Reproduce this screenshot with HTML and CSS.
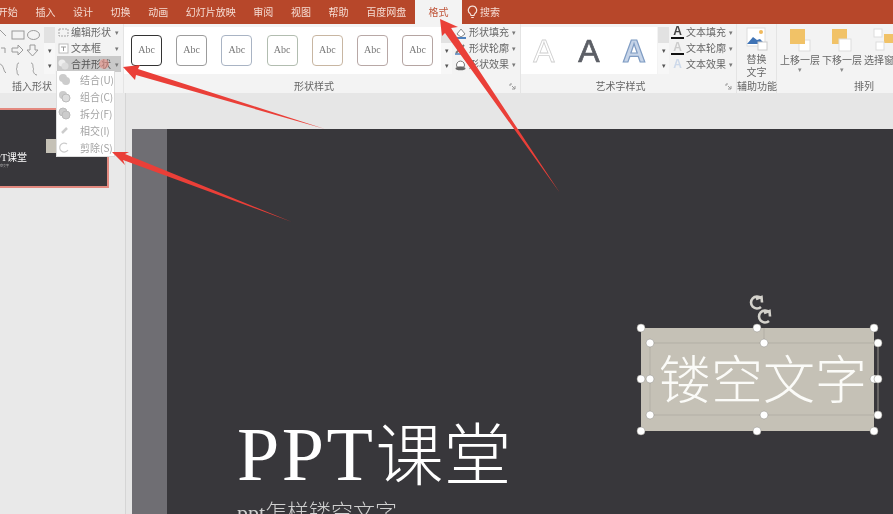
FILE: index.html
```html
<!DOCTYPE html>
<html lang="zh-CN">
<head>
<meta charset="utf-8">
<title>PPT课堂</title>
<link rel="stylesheet" href="styles.css">
</head>
<body>
<div class="app">
  <nav class="tabs">
    <span class="tab first">开始</span><span class="tab">插入</span><span class="tab">设计</span><span class="tab">切换</span><span class="tab">动画</span><span class="tab">幻灯片放映</span><span class="tab">审阅</span><span class="tab">视图</span><span class="tab">帮助</span><span class="tab">百度网盘</span>
    <span class="tab active">格式</span>
    <span class="search">
      <svg class="bulb" width="11" height="14" viewBox="0 0 11 14"><path d="M5.5 1a4.2 4.2 0 0 0-2.4 7.6c.6.5.8 1 .9 1.9h3c.1-.9.3-1.4.9-1.9A4.2 4.2 0 0 0 5.500 1zM4.200 12.500h2.600" fill="none" stroke="#f7e6df" stroke-width="1.200"/></svg>搜索
    </span>
  </nav>

  <section class="ribbon">
    <div class="group g-insert">
      <div class="group-body">
        <svg class="shapes" width="44" height="52" viewBox="0 0 44 52">
          <g fill="none" stroke="#9a9a9a" stroke-width="1">
            <path d="M-1 2l7 7"/><rect x="12" y="4" width="12" height="8"/><ellipse cx="33.500" cy="8" rx="6" ry="4.500"/>
            <path d="M1 21h4v5"/><path d="M12 21h6v-3l5 5-5 5v-3h-6z"/><path d="M30 18h5v5h3l-5.500 6-5.500-6h3z"/>
            <path d="M-1 37c5 0 4 7 7 9"/><path d="M19 36c-3 0-1 5-3 6 2 1 0 6 3 6"/><path d="M31 36c3 0 1 5 3 6-2 1 0 6 3 6"/>
          </g>
        </svg>
        <div class="scroll"><i class="up"></i><i>▾</i><i>▾</i></div>
        <div class="cmds edit">
          <div class="cmd"><svg width="11" height="11" viewBox="0 0 11 11"><rect x="1" y="2" width="9" height="7" fill="none" stroke="#a5a5a5" stroke-dasharray="2 1"/></svg><span>编辑形状</span><b>▾</b></div>
          <div class="cmd"><svg width="11" height="11" viewBox="0 0 11 11"><rect x="1" y="1" width="9" height="9" fill="#fff" stroke="#bdbdbd"/><path d="M3 4h5M5.500 4v4" stroke="#999"/></svg><span>文本框</span><b>▾</b></div>
          <div class="cmd merge"><svg width="11" height="11" viewBox="0 0 11 11"><circle cx="4" cy="4" r="3.500" fill="#eee"/><circle cx="7" cy="7" r="3.500" fill="#ddd"/></svg><span>合并形状</span><b>▾</b></div>
        </div>
      </div>
      <div class="group-label">插入形状</div>
    </div>

    <div class="group g-style">
      <div class="group-body">
        <div class="gallery styles">
          <span class="abc s1">Abc</span><span class="abc s2">Abc</span><span class="abc s3">Abc</span><span class="abc s4">Abc</span><span class="abc s5">Abc</span><span class="abc s6">Abc</span><span class="abc s7">Abc</span>
        </div>
        <div class="scroll"><i class="up"></i><i>▾</i><i>▾</i></div>
        <div class="cmds fmt">
          <div class="cmd"><svg width="13" height="13" viewBox="0 0 13 13"><path d="M3 8l4-5 4 5-4 3z" fill="#fff" stroke="#8a8a8a"/><path d="M1 12h11" stroke="#4f81bd" stroke-width="2"/></svg><span>形状填充</span><b>▾</b></div>
          <div class="cmd"><svg width="13" height="13" viewBox="0 0 13 13"><path d="M2 11l8-8" stroke="#777" stroke-width="2"/><path d="M1 12h11" stroke="#4f81bd" stroke-width="1.500"/></svg><span>形状轮廓</span><b>▾</b></div>
          <div class="cmd"><svg width="13" height="13" viewBox="0 0 13 13"><path d="M3 9a4 4 0 1 1 7 0z" fill="#fff" stroke="#777"/><ellipse cx="6.500" cy="10.500" rx="5" ry="1.800" fill="#666"/></svg><span>形状效果</span><b>▾</b></div>
        </div>
      </div>
      <div class="group-label">形状样式<svg class="launcher" width="7" height="7" viewBox="0 0 7 7"><path d="M1 1h2M1 1v2M6 3v3H3M3 3l3 3" fill="none" stroke="#999"/></svg></div>
    </div>

    <div class="group g-art">
      <div class="group-body">
        <div class="gallery arts">
          <span class="wa a1">A</span><span class="wa a2">A</span><span class="wa a3">A</span>
        </div>
        <div class="scroll"><i class="up"></i><i>▾</i><i>▾</i></div>
        <div class="cmds fmt text">
          <div class="cmd"><span class="ta under">A</span><span>文本填充</span><b>▾</b></div>
          <div class="cmd"><span class="ta under pale">A</span><span>文本轮廓</span><b>▾</b></div>
          <div class="cmd"><span class="ta glow">A</span><span>文本效果</span><b>▾</b></div>
        </div>
      </div>
      <div class="group-label">艺术字样式<svg class="launcher" width="7" height="7" viewBox="0 0 7 7"><path d="M1 1h2M1 1v2M6 3v3H3M3 3l3 3" fill="none" stroke="#999"/></svg></div>
    </div>

    <div class="group g-alt">
      <div class="group-body">
        <div class="big">
          <svg width="22" height="24" viewBox="0 0 22 24"><rect x="1" y="1" width="18" height="18" fill="#fff" stroke="#ddd"/><circle cx="15" cy="5" r="2" fill="#f0b95c"/><path d="M1 17l6-7 4 3 3-1 5 5z" fill="#3f73b5"/><rect x="12" y="15" width="9" height="8" fill="#fff" stroke="#ccc"/></svg>
          <span>替换<br>文字</span>
        </div>
      </div>
      <div class="group-label">辅助功能</div>
    </div>

    <div class="group g-arrange">
      <div class="group-body">
        <div class="order">
          <svg width="24" height="26" viewBox="0 0 24 26"><rect x="11" y="13" width="11" height="11" fill="#fff" stroke="#ddd"/><rect x="2" y="2" width="15" height="15" fill="#f1c267"/></svg>
          <span>上移一层</span><b>▾</b>
        </div>
        <div class="order">
          <svg width="24" height="26" viewBox="0 0 24 26"><rect x="2" y="2" width="15" height="15" fill="#f1c267"/><rect x="9" y="12" width="12" height="12" fill="#fff" stroke="#ddd"/></svg>
          <span>下移一层</span><b>▾</b>
        </div>
        <div class="order">
          <svg width="24" height="26" viewBox="0 0 24 26"><rect x="2" y="2" width="8" height="8" fill="#fff" stroke="#ddd"/><rect x="12" y="7" width="9" height="9" fill="#f1c267"/><rect x="4" y="15" width="8" height="8" fill="#fff" stroke="#ddd"/></svg>
          <span>选择窗格</span>
        </div>
      </div>
      <div class="group-label">排列</div>
    </div>
  </section>

  <main class="workspace">
    <aside class="thumbs">
      <div class="thumb">
        <div class="thumb-box"></div>
        <div class="thumb-title">PPT课堂</div>
        <div class="thumb-sub">ppt怎样镂空文字</div>
      </div>
    </aside>
    <div class="canvas">
      <div class="slide">
        <div class="strip"></div>
        <h1 class="title">PPT<span class="han">课堂</span></h1>
        <p class="subtitle">ppt怎样镂空文字</p>
        <div class="textbox">镂空文字</div>
      </div>
    </div>
  </main>

  <svg class="handles" width="893" height="514" viewBox="0 0 893 514">
    <g fill="none" stroke="#aeaba2" stroke-width=".8">
      <rect x="650" y="343" width="228" height="72"/>
      <path d="M764 328v15"/>
    </g>
    <g fill="none" stroke="#d4d2cc" stroke-width="2.600">
      <path d="M761 298a6 6 0 1 0 0 9M756 299l5.500-2 .5 5.500"/>
      <path d="M769 312a6 6 0 1 0 0 9M764 313l5.500-2 .5 5.500"/>
    </g>
    <g fill="#fff" stroke="#8d8b85" stroke-width=".5">
      <circle cx="641" cy="328" r="4"/><circle cx="757" cy="328" r="4"/><circle cx="874" cy="328" r="4"/>
      <circle cx="641" cy="379" r="4"/><circle cx="874" cy="379" r="4"/>
      <circle cx="641" cy="431" r="4"/><circle cx="757" cy="431" r="4"/><circle cx="874" cy="431" r="4"/>
      <circle cx="650" cy="343" r="4"/><circle cx="764" cy="343" r="4"/><circle cx="878" cy="343" r="4"/>
      <circle cx="650" cy="379" r="4"/><circle cx="878" cy="379" r="4"/>
      <circle cx="650" cy="415" r="4"/><circle cx="764" cy="415" r="4"/><circle cx="878" cy="415" r="4"/>
    </g>
  </svg>

  <ul class="menu">
    <li><svg width="13" height="13" viewBox="0 0 13 13"><circle cx="5" cy="5" r="4" fill="#ccc"/><circle cx="8" cy="8" r="4" fill="#ccc"/></svg>结合(U)</li>
    <li><svg width="13" height="13" viewBox="0 0 13 13"><circle cx="5" cy="5" r="4" fill="#ccc"/><circle cx="8" cy="8" r="4" fill="#ddd" stroke="#bbb"/></svg>组合(C)</li>
    <li><svg width="13" height="13" viewBox="0 0 13 13"><circle cx="5" cy="5" r="4" fill="#ccc" stroke="#bbb"/><circle cx="8" cy="8" r="4" fill="#ccc" stroke="#bbb"/></svg>拆分(F)</li>
    <li><svg width="13" height="13" viewBox="0 0 13 13"><path d="M4 9l5-5" stroke="#ccc" stroke-width="2.500"/></svg>相交(I)</li>
    <li><svg width="13" height="13" viewBox="0 0 13 13"><path d="M9 3a4.500 4.500 0 1 0 1 6" fill="none" stroke="#ccc" stroke-width="1.200"/></svg>剪除(S)</li>
  </ul>

  <svg class="arrows" width="893" height="514" viewBox="0 0 893 514">
    <circle cx="104" cy="64" r="5" fill="#e98f86" opacity=".6"/>
    <g fill="#ea3f38">
      <polygon points="123,67 135,80 136,75 325,129 138,69 140,65"/>
      <polygon points="112,152 125,165 123,160 292,222 125,154 129,152"/>
      <polygon points="440,19 442,36 445,33 560,193 451,28 458,27"/>
    </g>
  </svg>
</div>
</body>
</html>
```

FILE: styles.css
```css
* { box-sizing: border-box; }
html, body { margin: 0; padding: 0; }
body { background: #e6e6e6; }
.app {
  position: relative;
  width: 893px;
  height: 514px;
  overflow: hidden;
  display: flex;
  flex-direction: column;
  font-family: "Noto Sans CJK SC", "Noto Sans", sans-serif;
  font-size: 10px;
  color: #666;
  filter: blur(.5px);
}
svg { flex: none; display: block; }

/* title tabs */
.tabs {
  height: 24px;
  flex: none;
  display: flex;
  align-items: flex-start;
  background: #b7472a;
  color: #f5dcd3;
  line-height: 23px;
  white-space: nowrap;
}
.tab { padding: 0 8.8px; }
.first { margin-left: -11px; }
.tab.active {
  width: 47px;
  height: 24px;
  padding: 0;
  text-align: center;
  background: #f3f3f3;
  color: #c0573c;
}
.search { display: flex; align-items: center; gap: 2px; margin-left: 5px; height: 23px; }

/* ribbon */
.ribbon {
  height: 69px;
  flex: none;
  display: flex;
  background: #f3f3f3;
  white-space: nowrap;
}
.group { flex: none; display: flex; flex-direction: column; border-right: 1px solid #e4e4e4; }
.group-body { height: 55px; display: flex; padding-top: 3px; }
.group-label {
  position: relative;
  height: 14px;
  line-height: 13px;
  text-align: center;
  color: #666;
}
.launcher { position: absolute; right: 4px; top: 4px; }
.g-insert { width: 124px; }
.g-insert .group-label { text-align: left; padding-left: 12px; }
.g-style { width: 397px; }
.g-style .group-label, .g-art .group-label { padding-right: 16px; }
.g-art { width: 216px; }
.g-alt { width: 40px; }
.g-arrange { width: 174px; border-right: 0; }

.scroll { width: 11px; height: 47px; display: flex; flex-direction: column; background: #f7f7f7; }
.scroll i { flex: 1; font-style: normal; font-size: 7px; line-height: 15px; text-align: center; color: #555; }
.scroll .up { background: #e2e2e2; }

.cmds { display: flex; flex-direction: column; margin-top: -3px; }
.cmd { height: 16px; display: flex; align-items: center; line-height: 16px; }
.cmd b { font-weight: 400; font-size: 7px; color: #777; }
.edit { margin-left: 2px; width: 64px; }
.edit .cmd { gap: 2px; }
.edit .cmd svg { margin-left: 1px; }
.edit .cmd span { width: 42px; }
.merge { background: #c9c9c9; color: #555; }

.fmt { margin-left: 2px; }
.fmt .cmd { gap: 2px; }
.fmt .cmd span { width: 41px; }
.fmt .cmd span.ta {
  width: 13px;
  text-align: center;
  font: 700 12px/13px "Liberation Sans", sans-serif;
  color: #444;
}
.fmt .cmd span.under { border-bottom: 2px solid #111; height: 14px; }
.fmt .cmd span.pale { color: #ccc; }
.fmt .cmd span.glow { color: #cdd9ea; }

.gallery { height: 47px; display: flex; align-items: center; background: #fff; }
.styles { width: 317px; gap: 14.200px; padding: 0 0 0 7px; }
.abc {
  flex: none;
  width: 31px;
  height: 31px;
  border: 1.500px solid #999;
  border-radius: 4px;
  font: 10px/28px "Liberation Serif", serif;
  text-align: center;
  color: #777;
}
.s1 { border-color: #333; }
.s2 { border-color: #9c9c9c; }
.s3 { border-color: #a9b4c4; }
.s4 { border-color: #b2bdb0; }
.s5 { border-color: #c8b6a2; }
.s6 { border-color: #b8a8a6; }
.s7 { border-color: #b5a5a2; }

.arts { width: 136px; justify-content: space-between; padding: 0 7px; margin-right: 1px; }
.wa { width: 32px; text-align: center; font: 400 32px/38px "Liberation Sans", sans-serif; }
.a1 { color: #fff; -webkit-text-stroke: .8px #cfcfcf; }
.a2 { color: #5c5f66; -webkit-text-stroke: .7px #5c5f66; }
.a3 { color: #c6d4e8; font-weight: 700; -webkit-text-stroke: 1.200px #7f9cc3; }

.big { width: 39px; display: flex; flex-direction: column; align-items: center; text-align: center; line-height: 13px; }
.big span { margin-top: 1px; }
.order { display: flex; flex-direction: column; align-items: center; width: 42px; line-height: 13px; flex: none; }
.order span { height: 12px; }
.order b { font-weight: 400; font-size: 7px; line-height: 9px; color: #888; }
.g-arrange .group-body { padding-left: 2px; }

/* workspace */
.workspace { flex: 1; display: flex; min-height: 0; background: #e6e6e6; }
.thumbs { flex: none; width: 126px; padding-top: 15px; border-right: 1px solid #d5d5d5; background: #e9e9e9; }
.thumb {
  position: relative;
  width: 109px;
  height: 80px;
  border: 2px solid #e3897f;
  border-left: 0;
  background: #38373b;
  overflow: hidden;
}
.thumb-box { position: absolute; left: 46px; top: 29px; width: 14px; height: 14px; background: #c5c1b6; }
.thumb-title { position: absolute; right: 80px; top: 41px; color: #fff; font: 10px/14px "Liberation Serif", "Noto Sans CJK SC", serif; white-space: nowrap; }
.thumb-sub { position: absolute; right: 98px; top: 54px; color: #bbb; font-size: 3px; line-height: 4px; white-space: nowrap; }

.canvas { flex: 1; min-width: 0; padding: 36px 0 0 6px; overflow: hidden; }
.slide { position: relative; height: 385px; background: #38373b; overflow: hidden; }
.strip { position: absolute; left: 0; top: 0; bottom: 0; width: 35px; background: #6f6e73; }
.title {
  position: absolute;
  left: 105px;
  top: 277px;
  margin: 0;
  color: #fff;
  font: 400 76px/90px "Liberation Serif", serif;
  white-space: nowrap;
  letter-spacing: 2.500px;
}
.han { font: 300 68px/90px "Noto Sans CJK SC", sans-serif; letter-spacing: 0; }
.subtitle {
  position: absolute;
  left: 105px;
  top: 369px;
  margin: 0;
  color: #cfcfcf;
  font: 300 22px/30px "Liberation Serif", "Noto Sans CJK SC", serif;
  white-space: nowrap;
}
.textbox {
  position: absolute;
  left: 509px;
  top: 199px;
  width: 233px;
  height: 103px;
  padding-left: 11px;
  background: #c5c1b6;
  color: #fbfbf8;
  font: 300 52px/97px "Noto Sans CJK SC", sans-serif;
  text-align: center;
  white-space: nowrap;
}

/* overlays */
.handles, .arrows { position: absolute; left: 0; top: 0; pointer-events: none; }
.menu {
  position: absolute;
  left: 56px;
  top: 71px;
  width: 59px;
  height: 86px;
  margin: 0;
  padding: 0;
  list-style: none;
  background: #fff;
  border: 1px solid #ddd;
  border-top: 0;
  color: #a3a3a3;
}
.menu li { height: 17px; display: flex; align-items: center; gap: 9px; padding-left: 1px; line-height: 17px; white-space: nowrap; }
```
